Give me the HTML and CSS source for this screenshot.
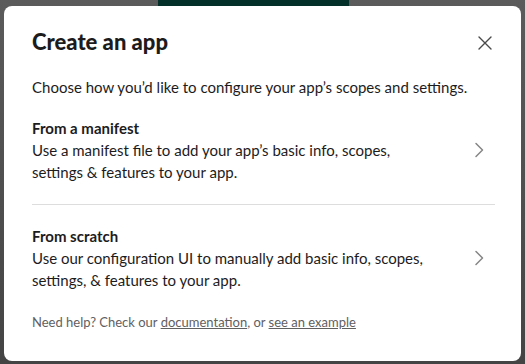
FILE: index.html
```html
<!DOCTYPE html>
<html>
<head>
<meta charset="utf-8">
<link rel="stylesheet" href="styles.css">
</head>
<body>
<div class="backdrop-top"><div class="green"></div></div>
<div class="modal">
  <div class="header">
    <h1 class="title">Create an app</h1>
    <button class="close" aria-label="Close">
      <svg width="14" height="14" viewBox="0 0 14 14"><path d="M1 1 L13 13 M13 1 L1 13" stroke="#4a4a4a" stroke-width="1.4" stroke-linecap="round" fill="none"/></svg>
    </button>
  </div>
  <p class="intro">Choose how you’d like to configure your app’s scopes and settings.</p>
  <div class="option first">
    <div class="option-text">
      <div class="option-title">From a manifest</div>
      <div class="option-desc">Use a manifest file to add your app’s basic info, scopes, settings &amp; features to your app.</div>
    </div>
    <svg class="chev" width="10" height="16" viewBox="0 0 10 16"><path d="M2 1.5 L8.5 8 L2 14.5" stroke="#868686" stroke-width="1.5" fill="none" stroke-linecap="round" stroke-linejoin="round"/></svg>
  </div>
  <div class="divider"></div>
  <div class="option second">
    <div class="option-text">
      <div class="option-title">From scratch</div>
      <div class="option-desc">Use our configuration UI to manually add basic info, scopes, settings, &amp; features to your app.</div>
    </div>
    <svg class="chev" width="10" height="16" viewBox="0 0 10 16"><path d="M2 1.5 L8.5 8 L2 14.5" stroke="#868686" stroke-width="1.5" fill="none" stroke-linecap="round" stroke-linejoin="round"/></svg>
  </div>
  <p class="help">Need help? Check our <a href="#">documentation</a>, or <a href="#">see an example</a></p>
</div>
</body>
</html>
```
FILE: styles.css
```css
html, body {
  margin: 0;
  padding: 0;
}
body {
  width: 525px;
  height: 364px;
  overflow: hidden;
  background: linear-gradient(#5b5b5b, #4d4d4d 60%, #444);
  font-family: Lato, "Noto Sans", sans-serif;
  color: #1d1c1d;
}
.backdrop-top {
  height: 6px;
  display: flex;
}
.green {
  margin-left: 158px;
  width: 191px;
  height: 6px;
  background: #04302a;
}
.modal {
  margin-left: 4px;
  width: 517px;
  height: 355px;
  box-sizing: border-box;
  background: #fff;
  border-radius: 8px;
  padding: 21px 26px 0 28px;
}
.header {
  display: flex;
  justify-content: space-between;
  align-items: center;
  height: 30px;
}
.title {
  margin: 0;
  font-size: 22px;
  font-weight: 900;
  line-height: 30px;
}
.close {
  border: 0;
  background: none;
  padding: 0;
  margin-right: 3px;
  margin-top: 2px;
  width: 14px;
  height: 14px;
  display: flex;
}
.intro {
  margin: 19px 0 0;
  font-size: 15px;
  line-height: 22px;
}
.option {
  display: flex;
  align-items: center;
  justify-content: space-between;
}
.option.first {
  padding: 19px 0 21px;
}
.option.second {
  padding: 20px 0 20px;
}
.option-text {
  width: 400px;
}
.option-title {
  font-size: 15px;
  font-weight: 700;
  line-height: 22px;
}
.option-desc {
  font-size: 15px;
  line-height: 22px;
}
.chev {
  margin-right: 11px;
}
.divider {
  height: 1px;
  background: #dddddd;
}
.help {
  margin: 2px 0 0;
  font-size: 13px;
  line-height: 18px;
  color: #616061;
}
.help a {
  color: #616061;
  text-decoration: underline;
}
```
